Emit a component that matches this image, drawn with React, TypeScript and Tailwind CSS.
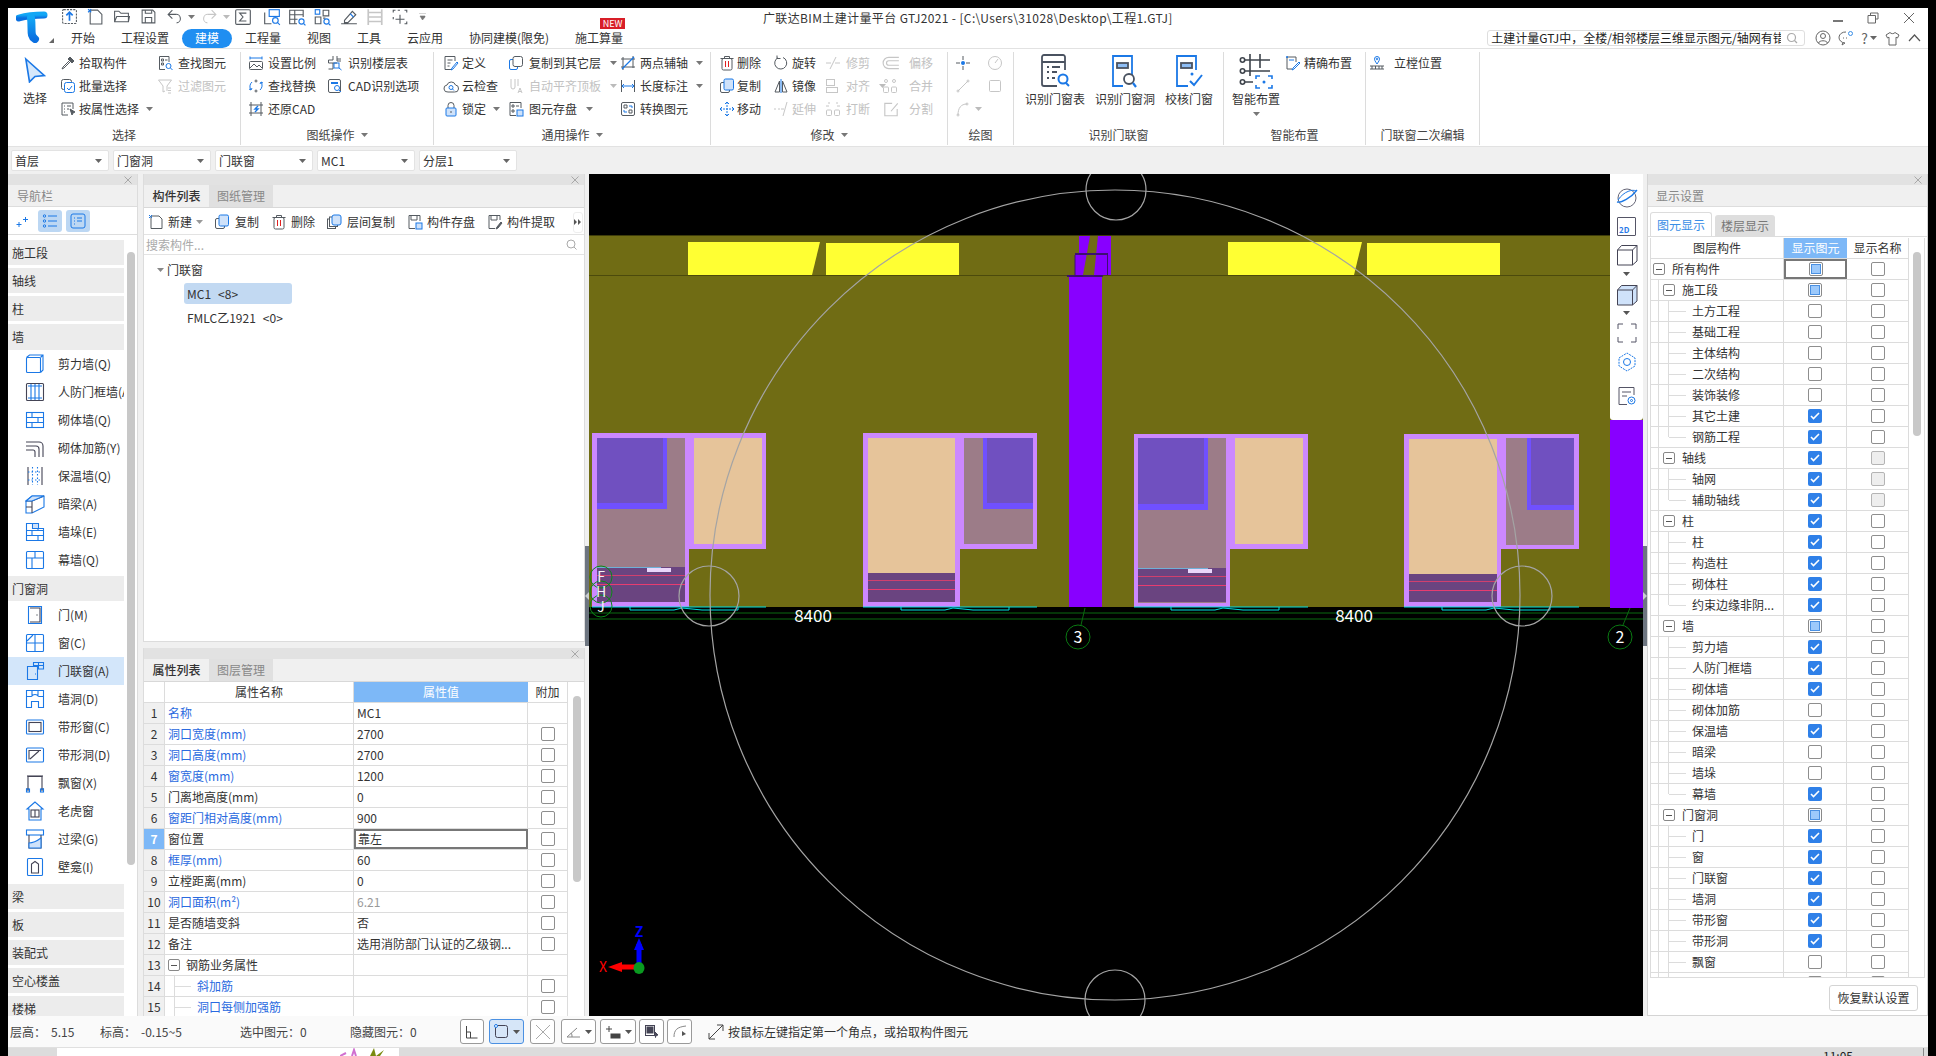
import React from "react";

const D = "#555b61";
const B = "#1b78e6";
const L = "#c6c6c6";

const Ic = ({ s = 16, children }: { s?: number; children: React.ReactNode }) => (
  <svg width={s} height={s} viewBox="0 0 16 16" fill="none" stroke={D} strokeWidth="1" className="shrink-0">
    {children}
  </svg>
);

const Caret = ({ c = "#777" }: { c?: string }) => (
  <svg width="7" height="4" viewBox="0 0 7 4" className="shrink-0">
    <path d="M0 0h7L3.5 4z" fill={c} />
  </svg>
);

/* ribbon icons */
const icPick = <Ic><path d="M10 2l4 4-2 2-4-4z" fill={D} /><path d="M9 6l-6 6-1 2 2-1 6-6" /></Ic>;
const icBatch = <Ic><rect x="1.5" y="1.5" width="10" height="10" rx="2" /><rect x="4.5" y="4.5" width="10" height="10" rx="2" stroke={B} fill="#fff" /><path d="M7 10l2 2 3-4" stroke={B} /></Ic>;
const icAttr = <Ic><path d="M13 8V2H2v12h6" /><path d="M4 5h1M7 5h4M4 8h1M7 8h2M4 11h1" /><path d="M10 8l5 3-2 1-1 2z" fill={D} /></Ic>;
const icFind = <Ic><path d="M12 7V1.5H2.5v13H8" /><path d="M4.5 4h2v2h-2zM8 5h2.5M4.5 8h2v2h-2z" /><circle cx="11.5" cy="11" r="2.5" stroke={B} /><path d="M13.5 13l2 2" stroke={B} /></Ic>;
const icFilter = <Ic><path d="M1.5 2h13L10 8v5M1.5 2L6 8v6l2-1" stroke={L} /><path d="M11 10h3M11 12.5h3M11 15h3" stroke={L} /></Ic>;
const icScale = <Ic><path d="M2 3h12M2 1.5v3M14 1.5v3" stroke={B} /><rect x="1.5" y="6.5" width="13" height="8" rx="1" /><path d="M2 13l4-4 3 3 2-2 3 3" /></Ic>;
const icFloorTable = <Ic><path d="M6 1v4H1.5v3h4.5v6H1.5M6 8h4M10 1v5h4M10 4h4" /><rect x="7" y="8" width="5" height="5" stroke={B} /><path d="M12 13l2.5 2" stroke={B} /></Ic>;
const icReplace = <Ic><path d="M4 4a6 6 0 0 0-1 8" stroke={B} /><path d="M12 12a6 6 0 0 0 1-8" stroke={B} /><path d="M3 12l-2-1M3 12l1-2M13 4l2 1M13 4l-1 2" stroke={B} /><circle cx="8" cy="3" r="1" /><circle cx="8" cy="13" r="1" /></Ic>;
const icCadOpt = <Ic><rect x="1.5" y="1.5" width="12" height="13" rx="1.5" /><path d="M4 5h7" stroke={B} strokeWidth="2" /><circle cx="10" cy="10" r="2.5" stroke={B} /><path d="M12 12l2 2" stroke={B} /></Ic>;
const icRestore = <Ic><path d="M3 1v14M13 1v14M1 4h14M1 12h14" /><path d="M10 5L7 8h3L7 11" stroke={B} strokeWidth="1.4" /></Ic>;
const icDefine = <Ic><path d="M12 6V1.5H2v13h7" /><path d="M4.5 5h5M4.5 8h3M4.5 11h2" /><path d="M14 7l-5 6-1 2 2-1 5-6z" stroke={B} /></Ic>;
const icCloud = <Ic><path d="M5 14a3.5 3.5 0 0 1-1-7 4.5 4.5 0 0 1 8.5 0 3.5 3.5 0 0 1-1 7z" /><circle cx="8" cy="9.5" r="2" stroke={B} /><path d="M9.5 11l1.5 1.5" stroke={B} /></Ic>;
const icLock = <Ic><path d="M5 7V4.5a3 3 0 0 1 6 0V7" /><rect x="3" y="7" width="10" height="8" rx="1" fill="#cfe2fa" stroke={B} /><path d="M8 10v2" stroke={D} /></Ic>;
const icCopyLayer = <Ic><rect x="1.5" y="4.5" width="8" height="10" rx="1.5" stroke={B} /><rect x="5" y="1.5" width="9.5" height="10" rx="2" fill="#fff" /></Ic>;
const icAlignTop = <Ic><path d="M3 1v8a1 1 0 0 0 4 0V1M10 1v7" stroke={L} /><path d="M10 15l2-5 2 5M11 13.5h2" stroke={L} /></Ic>;
const icSaveEl = <Ic><path d="M13 7V1.5H2v13h6" /><path d="M4 4h2v2H4zM8 5h3M4 9h2v2H4z" /><rect x="9" y="9" width="6" height="6" stroke={B} fill="#cfe2fa" /></Ic>;
const icTwoPoint = <Ic><path d="M3 2v13M13 1v12M1 4h14M1 12h14" /><path d="M2 14L14 2" stroke={B} strokeWidth="1.3" /></Ic>;
const icLength = <Ic><path d="M1.5 2v12M14.5 2v12" /><path d="M2 8h12M4 6L2 8l2 2M12 6l2 2-2 2" stroke={B} /></Ic>;
const icConvert = <Ic><rect x="1.5" y="1.5" width="13" height="13" rx="1.5" /><path d="M4 4h3v3H4zM9 9h3v3H9z" /><path d="M9 5h3v2M7 11H4V9" stroke={B} /></Ic>;
const icDelete = <Ic><path d="M1.5 3.5h13M5.5 3V1.5h5V3" /><rect x="3" y="3.5" width="10" height="11.5" rx="1.5" /><path d="M6.5 6v6M9.5 6v6" stroke="#e02020" /></Ic>;
const icRotate = <Ic><path d="M10 2.5a6 6 0 1 1-5 .2" /><path d="M4 .5v3h3.5" stroke={D} /></Ic>;
const icTrim = <Ic><path d="M1 8h5M10 8h5M11 2L5 14" stroke={L} /></Ic>;
const icOffset = <Ic s={18}><path d="M15 3H6a5 5 0 0 0 0 10h9M15 6H6a2 2 0 0 0 0 4h9" stroke={L} /></Ic>;
const icCopy = <Ic><rect x="1.5" y="4.5" width="9" height="10" rx="1.5" /><rect x="5" y="1" width="9.5" height="11" rx="1.5" fill="#cfe2fa" stroke={B} /></Ic>;
const icMirror = <Ic><path d="M2 14L6.5 3v11zM14 14L9.5 3v11z" /><path d="M8 1v14" stroke={B} /></Ic>;
const icAlign = <Ic><rect x="1.5" y="1.5" width="8" height="6" stroke={L} /><rect x="1.5" y="9.5" width="11" height="5" stroke={L} /></Ic>;
const icMerge = <Ic><circle cx="4" cy="3" r="1.5" stroke={L} /><circle cx="12" cy="3" r="1.5" stroke={L} /><rect x="1.5" y="9" width="5" height="5.5" rx="1" stroke={L} /><rect x="9.5" y="9" width="5" height="5.5" rx="1" stroke={L} /></Ic>;
const icMove = <Ic><path d="M8 1v14M1 8h14" stroke={B} strokeDasharray="2 1" /><path d="M6 3l2-2 2 2M6 13l2 2 2-2M3 6L1 8l2 2M13 6l2 2-2 2" stroke={B} /></Ic>;
const icExtend = <Ic><path d="M1 8h2M5 8h2M8 8h3M14 1l-4 14" stroke={L} /></Ic>;
const icBreak = <Ic><path d="M4 1v2M12 1v2M1 5h3M12 5h3" stroke={L} /><rect x="1.5" y="9" width="5" height="5.5" rx="1" stroke={L} /><rect x="9.5" y="9" width="5" height="5.5" rx="1" stroke={L} /></Ic>;
const icSplit = <Ic s={18}><path d="M9 3H2.5v11h11V8M8 10l6-7" stroke={L} /></Ic>;
const icPoint = <Ic><path d="M8 1v4M8 11v4M1 8h4M11 8h4" stroke={D} /><circle cx="8" cy="8" r="2" fill={B} stroke="none" /></Ic>;
const icCircle = <Ic><circle cx="8" cy="8" r="6.5" stroke={L} /><path d="M8 8l3-4" stroke={L} /></Ic>;
const icLine = <Ic><path d="M3 13L13 3" stroke={L} /><circle cx="3" cy="13" r="1" stroke={L} /><circle cx="13" cy="3" r="1" stroke={L} /></Ic>;
const icRect = <Ic><rect x="2.5" y="2.5" width="11" height="11" rx="1" stroke={L} /></Ic>;
const icArc = <Ic><path d="M3 14C3 7 6 3 12 3" stroke={L} /><circle cx="3" cy="14" r="1" stroke={L} /><circle cx="12" cy="3" r="1" stroke={L} /></Ic>;
const icAccurate = <Ic><path d="M2 2h9v5M2 2v12h5" /><path d="M4 5h5" stroke={B} /><path d="M14 7l-6 6-1 2 2-1 6-6z" stroke={B} /><circle cx="2" cy="2" r="1" fill={B} stroke="none" /></Ic>;
const icPost = <Ic><path d="M8 9C6 6 5.5 5 5.5 4a2.5 2.5 0 0 1 5 0C10.5 5 10 6 8 9z" stroke={B} /><circle cx="8" cy="4" r=".8" stroke={B} /><path d="M1 11h14M1 14h14" /><path d="M3 11v3M6.5 11v3M10 11v3M13 11v3" /></Ic>;

const BigTable = () => (
  <svg width="32" height="34" viewBox="0 0 32 34" fill="none" stroke="#4a5260" strokeWidth="1.8" className="shrink-0">
    <path d="M26 16V3a2 2 0 0 0-2-2H5a2 2 0 0 0-2 2v27a2 2 0 0 0 2 2h13" />
    <path d="M3 8h23M8 13h2M13 13h8M8 18h2M13 18h5M8 24h2M13 24h3" />
    <circle cx="24" cy="25" r="4.5" stroke={B} strokeWidth="2" />
    <path d="M27 29l3 3" stroke={B} strokeWidth="2" />
  </svg>
);
const BigOpening = () => (
  <svg width="32" height="34" viewBox="0 0 32 34" fill="none" stroke={B} strokeWidth="1.8" className="shrink-0">
    <path d="M4 33V2h19v19M4 32h10" />
    <rect x="8" y="9" width="11" height="5" fill="#8dbdf5" stroke="#4a5260" />
    <circle cx="20" cy="25" r="5" stroke="#4a5260" />
    <path d="M24 29l3 4" strokeWidth="2.2" />
  </svg>
);
const BigCheck = () => (
  <svg width="32" height="34" viewBox="0 0 32 34" fill="none" stroke={B} strokeWidth="1.8" className="shrink-0">
    <path d="M4 33V2h19v14M4 32h11" />
    <rect x="8" y="9" width="11" height="5" fill="#8dbdf5" stroke="#4a5260" />
    <circle cx="19" cy="20" r="1.5" fill={B} stroke="none" />
    <path d="M17 27l4 4 8-10" strokeWidth="2" />
  </svg>
);
const BigSmart = () => (
  <svg width="34" height="36" viewBox="0 0 34 36" fill="none" stroke="#3e444c" strokeWidth="1.6" className="shrink-0">
    <path d="M11 1v22M21 1v14M5 7h26M5 18h26M5 29h9" />
    <circle cx="3.5" cy="7" r="2.2" /><circle cx="3.5" cy="18" r="2.2" /><circle cx="3.5" cy="29" r="2.2" />
    <path d="M21 23h-4v3M29 23h4v3M21 35h-4v-3M29 35h4v-3" stroke={B} />
    <circle cx="25" cy="29" r="1.5" fill={B} stroke="none" />
  </svg>
);

const Item = ({
  icon,
  label,
  caret,
  off,
  gap = "gap-[3px]",
}: {
  icon: React.ReactNode;
  label: string;
  caret?: boolean;
  off?: boolean;
  gap?: string;
}) => (
  <div className={`flex h-[23px] items-center whitespace-nowrap ${gap} ${off ? "text-[#c2c2c2]" : "text-[#333]"}`}>
    {icon}
    <span>{label}</span>
    {caret && <span className="ml-[4px]"><Caret c={off ? "#bbb" : "#777"} /></span>}
  </div>
);

const Col = ({ w, children }: { w: string; children: React.ReactNode }) => (
  <div className={`flex shrink-0 flex-col ${w}`}>{children}</div>
);

const Big = ({ w, icon, label, caret }: { w: string; icon: React.ReactNode; label: string; caret?: boolean }) => (
  <div className={`flex shrink-0 flex-col items-center whitespace-nowrap text-[#333] ${w}`}>
    <div className="mt-[2px] flex h-[36px] items-center">{icon}</div>
    <div className="h-[20px] leading-[20px]">{label}</div>
    {caret && <div className="mt-[3px]"><Caret /></div>}
  </div>
);

const Group = ({
  w,
  pad = "",
  label,
  caret,
  children,
}: {
  w: string;
  pad?: string;
  label: string;
  caret?: boolean;
  children: React.ReactNode;
}) => (
  <div className={`my-[3px] flex h-[93px] shrink-0 flex-col border-r border-[#dcdcdc] ${w}`}>
    <div className={`-mt-[1px] flex h-[74px] ${pad}`}>{children}</div>
    <div className="flex h-[20px] items-center justify-center gap-[6px] text-[#444]">
      {label}
      {caret && <Caret />}
    </div>
  </div>
);

/* quick access toolbar */
const qat: { w: string; el: React.ReactNode }[] = [
  { w: "w-[26px]", el: <Ic s={17}><rect x="1.5" y="1.5" width="13" height="13" rx="1" strokeDasharray="2 1" /><path d="M8 12V5M5 7l3-3 3 3" stroke="#1b78e6" strokeWidth="1.6" /></Ic> },
  { w: "w-[26px]", el: <Ic s={17}><path d="M3 2h7l4 4v9H3z" /><path d="M1 1l3 3M4 1L1 4" stroke={B} /></Ic> },
  { w: "w-[27px]", el: <Ic s={17}><path d="M1.5 13V3h4l2 2h7v8zM1.5 13l2-5h12l-1 5" /></Ic> },
  { w: "w-[26px]", el: <Ic s={17}><path d="M2 2h10l2 2v10H2z" /><path d="M5 2v3h6V2M5 14V9h6v5" /></Ic> },
  { w: "w-[35px]", el: <div className="flex items-center gap-[5px]"><Ic s={17}><path d="M6 2L2 6l4 4M2 6h7a4 4 0 0 1 1 8" /></Ic><Caret /></div> },
  { w: "w-[33px]", el: <div className="flex items-center gap-[5px]"><Ic s={17}><path d="M10 2l4 4-4 4M14 6H7a4 4 0 0 0-1 8" stroke={L} /></Ic><Caret c="#bbb" /></div> },
  { w: "w-[29px]", el: <Ic s={18}><rect x="1.5" y="1.5" width="13" height="13" rx="1" /><path d="M11 4.5H5L8 8l-3 3.5h6" /></Ic> },
  { w: "w-[25px]", el: <Ic s={18}><rect x="5.5" y="1.5" width="9" height="6" stroke={B} /><path d="M1.5 4v10h6" /><circle cx="11" cy="11" r="2.5" stroke={B} /><path d="M13 13l2 2" stroke={B} /></Ic> },
  { w: "w-[25px]", el: <Ic s={18}><path d="M8 14H1.5V2h12v6M1.5 6h12M1.5 10h7M6 2v12" /><circle cx="12" cy="12" r="2.3" stroke={B} /><path d="M14 14l1.5 1.5" stroke={B} /></Ic> },
  { w: "w-[27px]", el: <Ic s={18}><rect x="2" y="1.5" width="4" height="4" stroke={B} /><path d="M9 2h5v5H9zM2 8h5v6H2zM9 9h2" /><circle cx="12" cy="12" r="2.3" stroke={B} /><path d="M14 14l1.5 1.5" stroke={B} /></Ic> },
  { w: "w-[26px]", el: <Ic s={18}><path d="M1 14h14M4 11l7-8 3 3-7 7H4z" /><path d="M9 5l3 3" stroke={B} /></Ic> },
  { w: "w-[25px]", el: <Ic s={18}><path d="M2 1v14M14 1v14M2 4h12M2 8h12M2 12h12" stroke={L} strokeWidth="1.5" /></Ic> },
  { w: "w-[28px]", el: <Ic s={18}><path d="M2 4V2h2M6 2h2M12 2h2v2M14 12v2h-2M2 8v2" /><path d="M8 6v8M4 10h8" stroke={D} /></Ic> },
  { w: "w-[10px]", el: <svg width="7" height="8" viewBox="0 0 7 8"><path d="M0 0h7M1 3h5v1L3.5 7z" stroke="#777" fill="#777" strokeWidth=".6" /></svg> },
];

const tabs: [string, string][] = [
  ["开始", "w-[56px]"],
  ["工程设置", "w-[68px]"],
  ["建模", "w-[56px]"],
  ["工程量", "w-[56px]"],
  ["视图", "w-[56px]"],
  ["工具", "w-[44px]"],
  ["云应用", "w-[68px]"],
  ["协同建模(限免)", "w-[100px]"],
  ["施工算量", "w-[80px]"],
];

const Header = () => (
  <div className="flex h-[40px] bg-white">
    <div className="relative w-[47px] shrink-0">
      <svg width="32" height="32" viewBox="0 0 32 32" className="ml-[8px] mt-[3px]">
        <defs>
          <linearGradient id="lg" x1="0" y1="0" x2="0" y2="1">
            <stop offset="0" stopColor="#13a7f5" />
            <stop offset="1" stopColor="#0a6fe0" />
          </linearGradient>
        </defs>
        <path d="M3 7c7-2 18-3 25-3" stroke="url(#lg)" strokeWidth="7" strokeLinecap="round" fill="none" />
        <path d="M15 7c1 7 0 13 1 17 .5 2 1.5 3 3 4" stroke="url(#lg)" strokeWidth="8" strokeLinecap="round" fill="none" />
      </svg>
      <svg width="5" height="5" viewBox="0 0 5 5" className="absolute right-[1px] top-[30px]"><path d="M5 0v5H0z" fill="#666" /></svg>
    </div>
    <div className="flex min-w-0 flex-1 flex-col">
      <div className="flex h-[20px] items-center">
        <div className="flex w-[708px] shrink-0 items-center pl-[6px]">
          {qat.map((q, i) => (
            <div key={i} className={`flex shrink-0 justify-start pb-[3px] ${q.w}`}>{q.el}</div>
          ))}
        </div>
        <div className="whitespace-nowrap text-[12px] tracking-[0.37px] text-[#333]">广联达BIM土建计量平台 GTJ2021 - [C:\Users\31028\Desktop\工程1.GTJ]</div>
        <div className="flex-1" />
        <div className="flex items-center gap-[24px] pr-[13px] text-[#666]">
          <div className="mt-[6px] h-[2px] w-[10px] bg-[#777]" />
          <svg width="12" height="12" viewBox="0 0 12 12" fill="none" stroke="#666"><path d="M3.5 3V1H11v6H9M1 3.5h7.5V11H1z" /></svg>
          <svg width="12" height="12" viewBox="0 0 12 12" fill="none" stroke="#666"><path d="M1 1l10 10M11 1L1 11" /></svg>
        </div>
      </div>
      <div className="flex h-[20px] items-center">
        {tabs.map(([t, w]) => (
          <div key={t} className={`relative flex shrink-0 justify-center ${w}`}>
            {t === "建模" ? (
              <div className="flex h-[19px] w-[50px] items-center justify-center rounded-full bg-[#1f8ef1] text-white">{t}</div>
            ) : (
              <div className="text-[#333]">{t}</div>
            )}
            {t === "施工算量" && (
              <div className="absolute left-[41px] top-[-11px] flex h-[11px] w-[25px] items-center justify-center bg-[#d81e28] text-[9px] leading-none text-white">NEW</div>
            )}
          </div>
        ))}
        <div className="flex-1" />
        <div className="flex h-[16px] w-[318px] items-center rounded-[3px] border border-[#dedede] pl-[3px] pr-[6px]">
          <div className="w-[290px] overflow-hidden whitespace-nowrap text-[12px] leading-[14px] text-[#222]">土建计量GTJ中，全楼/相邻楼层三维显示图元/轴网有错位怎么办</div>
          <div className="flex-1" />
          <svg width="12" height="12" viewBox="0 0 12 12" fill="none" stroke="#aaa" strokeWidth="1.2"><circle cx="5.5" cy="5.5" r="4" /><path d="M8.5 8.5L11 11" /></svg>
        </div>
        <div className="ml-[10px] flex items-center gap-[7px] pr-[7px]">
          <svg width="16" height="16" viewBox="0 0 16 16" fill="none" stroke="#666"><circle cx="8" cy="8" r="7" /><circle cx="8" cy="6" r="2.5" /><path d="M3.5 13c1-3 8-3 9 0" /></svg>
          <svg width="16" height="16" viewBox="0 0 16 16" fill="none" stroke="#666"><path d="M8 2a6.5 5.5 0 1 0-1 11l-3 2 1-2.5" /><path d="M5 8h1M8 8h1" /><circle cx="12.5" cy="3.5" r="2" stroke="#3a8ee6" /></svg>
          <div className="flex items-center gap-[2px] text-[14px] leading-none text-[#666]">?<Caret c="#666" /></div>
          <svg className="ml-[1px]" width="15" height="15" viewBox="0 0 15 15" fill="none" stroke="#666"><path d="M5 1.5L1 4l1.5 3L4 6.2V14h7V6.2l1.5.8L14 4l-4-2.5c-1 1.5-4 1.5-5 0z" /></svg>
          <svg className="ml-[1px]" width="13" height="8" viewBox="0 0 13 8" fill="none" stroke="#555" strokeWidth="1.2"><path d="M1 7l5.5-6L12 7" /></svg>
        </div>
      </div>
    </div>
  </div>
);

const Ribbon = () => (
  <div className="flex h-[99px] border-y border-[#e2e2e2] bg-white text-[12px]">
    <Group w="w-[233px]" pad="pl-[2px]" label="选择">
      <div className="flex w-[50px] shrink-0 flex-col items-center text-[#333]">
        <svg width="22" height="26" viewBox="0 0 24 28" fill="#d6e8fb" stroke={B} strokeWidth="1.8" className="mt-[6px]"><path d="M2 2l20 18-10 1-6 6z" /></svg>
        <div className="mt-[6px]">选择</div>
      </div>
      <Col w="w-[97px]">
        <Item icon={icPick} label="拾取构件" />
        <Item icon={icBatch} label="批量选择" />
        <Item icon={icAttr} label="按属性选择" caret />
      </Col>
      <Col w="w-[80px]">
        <Item icon={icFind} label="查找图元" gap="gap-[5px]" />
        <Item icon={icFilter} label="过滤图元" off gap="gap-[5px]" />
      </Col>
    </Group>
    <Group w="w-[193px]" pad="pl-[7px]" label="图纸操作" caret>
      <Col w="w-[79px]">
        <Item icon={icScale} label="设置比例" gap="gap-[4px]" />
        <Item icon={icReplace} label="查找替换" gap="gap-[4px]" />
        <Item icon={icRestore} label="还原CAD" gap="gap-[4px]" />
      </Col>
      <Col w="w-[100px]">
        <Item icon={icFloorTable} label="识别楼层表" gap="gap-[5px]" />
        <Item icon={icCadOpt} label="CAD识别选项" gap="gap-[5px]" />
      </Col>
    </Group>
    <Group w="w-[277px]" pad="pl-[9px]" label="通用操作" caret>
      <Col w="w-[65px]">
        <Item icon={icDefine} label="定义" />
        <Item icon={icCloud} label="云检查" />
        <Item icon={icLock} label="锁定" caret />
      </Col>
      <Col w="w-[112px]">
        <Item icon={icCopyLayer} label="复制到其它层" caret gap="gap-[5px]" />
        <Item icon={icAlignTop} label="自动平齐顶板" caret off gap="gap-[5px]" />
        <Item icon={icSaveEl} label="图元存盘" caret gap="gap-[5px]" />
      </Col>
      <Col w="w-[85px]">
        <Item icon={icTwoPoint} label="两点辅轴" caret gap="gap-[4px]" />
        <Item icon={icLength} label="长度标注" caret gap="gap-[4px]" />
        <Item icon={icConvert} label="转换图元" gap="gap-[4px]" />
      </Col>
    </Group>
    <Group w="w-[237px]" pad="pl-[8px]" label="修改" caret>
      <Col w="w-[54px]">
        <Item icon={icDelete} label="删除" gap="gap-[2px]" />
        <Item icon={icCopy} label="复制" gap="gap-[2px]" />
        <Item icon={icMove} label="移动" gap="gap-[2px]" />
      </Col>
      <Col w="w-[52px]">
        <Item icon={icRotate} label="旋转" />
        <Item icon={icMirror} label="镜像" />
        <Item icon={icExtend} label="延伸" off />
      </Col>
      <Col w="w-[57px]">
        <Item icon={icTrim} label="修剪" off gap="gap-[5px]" />
        <Item icon={icAlign} label="对齐" caret off gap="gap-[5px]" />
        <Item icon={icBreak} label="打断" off gap="gap-[5px]" />
      </Col>
      <Col w="w-[60px]">
        <Item icon={icOffset} label="偏移" off gap="gap-[9px]" />
        <Item icon={icMerge} label="合并" off gap="gap-[11px]" />
        <Item icon={icSplit} label="分割" off gap="gap-[9px]" />
      </Col>
    </Group>
    <Group w="w-[66px]" pad="pl-[7px]" label="绘图">
      <Col w="w-[32px]">
        <Item icon={icPoint} label="" />
        <Item icon={icLine} label="" />
        <Item icon={<div className="flex items-center gap-[4px]">{icArc}<Caret c="#bbb" /></div>} label="" />
      </Col>
      <Col w="w-[20px]">
        <Item icon={icCircle} label="" />
        <Item icon={icRect} label="" />
      </Col>
    </Group>
    <Group w="w-[210px]" label="识别门联窗">
      <Big w="w-[82px]" icon={<BigTable />} label="识别门窗表" />
      <Big w="w-[58px]" icon={<BigOpening />} label="识别门窗洞" />
      <Big w="w-[70px]" icon={<BigCheck />} label="校核门窗" />
    </Group>
    <Group w="w-[142px]" pad="pl-[3px]" label="智能布置">
      <Big w="w-[58px]" icon={<BigSmart />} label="智能布置" caret />
      <Col w="w-[76px]">
        <Item icon={icAccurate} label="精确布置" />
      </Col>
    </Group>
    <Group w="w-[114px]" pad="pl-[3px]" label="门联窗二次编辑">
      <Col w="w-[90px]">
        <Item icon={icPost} label="立樘位置" gap="gap-[9px]" />
      </Col>
    </Group>
  </div>
);

const ComboBar = () => (
  <div className="flex h-[27px] gap-[4px] bg-[#f0f0f0] pl-[3px] pt-[3px] text-[12px]">
    {["首层", "门窗洞", "门联窗", "MC1", "分层1"].map((t) => (
      <div key={t} className="flex h-[21px] w-[98px] items-center justify-between rounded-[2px] border border-[#e3e3e3] bg-white pl-[3px] pr-[6px] text-[#333]">
        {t}
        <Caret c="#666" />
      </div>
    ))}
  </div>
);

const CloseX = () => (
  <svg width="8" height="8" viewBox="0 0 8 8" fill="none" stroke="#a8a8a8"><path d="M.5.5l7 7M7.5.5l-7 7" /></svg>
);

const GrayBar = () => (
  <div className="flex h-[11px] shrink-0 items-center justify-end bg-[#e2e2e2] pr-[5px]">
    <CloseX />
  </div>
);

/* nav icons */
const N = ({ children }: { children: React.ReactNode }) => (
  <svg width="20" height="20" viewBox="0 0 20 20" fill="none" stroke={B} strokeWidth="1.1" className="shrink-0">
    {children}
  </svg>
);

const navWall: [string, React.ReactNode][] = [
  ["剪力墙(Q)", <N><rect x="1.5" y="3.5" width="14" height="15" rx="1" /><path d="M1.5 3.5L4.5 1H18v15l-2.5 2.5M15.5 3.5L18 1" /></N>],
  ["人防门框墙(A)", <N><rect x="1.5" y="1.5" width="17" height="17" rx="1" stroke="#445" /><path d="M6 2v16M10 2v16M14 2v16M3 4h14M3 16h14" /></N>],
  ["砌体墙(Q)", <N><rect x="1.5" y="2.5" width="17" height="15" /><path d="M1.5 7.5h17M1.5 12.5h17M7 2.5v5M13 7.5v5M7 12.5v5" /></N>],
  ["砌体加筋(Y)", <N><path d="M1 4h13a4 4 0 0 1 4 4v11M1 8h10a3 3 0 0 1 3 3v8M1 12h7a2 2 0 0 1 2 2v5" stroke="#445" /></N>],
  ["保温墙(Q)", <N><path d="M3 1v18M17 1v18" stroke="#445" /><path d="M7.5 1v18M12.5 1v18M3 6h14M3 14h14" strokeDasharray="1.5 2" /></N>],
  ["暗梁(A)", <N><path d="M1 7l6-5h12v11l-12 6H1z" /><path d="M1 7h6V19M7 7l12-5M1 13h6" stroke="#445" /><path d="M1 7l6-5h12L7 7z" fill="#cfe2fa" /></N>],
  ["墙垛(E)", <N><path d="M1.5 1.5h6v5h11v12h-17z" /><path d="M1.5 8.5h17M1.5 13.5h17M7 8.5v5M13 13.5v5M13 8.5v-2M7.5 1.5h6v5" /><rect x="8" y="2" width="5" height="4" fill="#cfe2fa" stroke="none" /></N>],
  ["幕墙(Q)", <N><rect x="1.5" y="1.5" width="17" height="17" rx="1" /><path d="M1.5 8h17M10 1.5V8M7 8v10.5" /></N>],
];
const navOpen: [string, React.ReactNode][] = [
  ["门(M)", <N><path d="M3.5 1.5h13v17h-13z" /><path d="M5 3h10v14H5" stroke="#445" /><circle cx="12" cy="10" r=".7" fill={D} stroke="none" /></N>],
  ["窗(C)", <N><rect x="1.5" y="1.5" width="17" height="17" rx="1" /><path d="M1.5 10h17M10 1.5v17M2 8l6-6" /></N>],
  ["门联窗(A)", <N><path d="M2.5 18.5v-13h10v13zM12.5 8h6V1.5h-10v4M13.5 1.5V8M8.5 4.5h10M10 13h1" /></N>],
  ["墙洞(D)", <N><path d="M1.5 18.5v-17h17v17h-5v-6h-7v6zM1.5 7.5h5M13.5 7.5h5M7 2v5M13 2v5M6.5 7.5a4 4 0 0 1 7 0" /></N>],
  ["带形窗(C)", <N><rect x="1.5" y="3" width="17" height="14" rx="1" /><rect x="4" y="5.5" width="12" height="9" stroke="#445" /></N>],
  ["带形洞(D)", <N><rect x="1.5" y="3" width="17" height="14" rx="1" /><path d="M4 14.5V5.5h12M5 14l9-8" stroke="#445" /></N>],
  ["飘窗(X)", <N><path d="M3 18V3.5h14V18M1 16h3M16 16h3" stroke="#445" /><path d="M2 3h16" stroke="#445" /><rect x="1.5" y="16" width="3" height="3" /><rect x="15.5" y="16" width="3" height="3" /></N>],
  ["老虎窗", <N><path d="M10 1L2 8h2v11h12V8h2z" /><rect x="6" y="9" width="8" height="7" stroke="#445" /><path d="M10 9v7" stroke="#445" /></N>],
  ["过梁(G)", <N><rect x="1.5" y="1" width="17" height="5" /><path d="M4 6v13h12V6" stroke="#445" /><path d="M4 14c4 0 8-2 12-5v10H4z" fill="#cfe2fa" /></N>],
  ["壁龛(I)", <N><rect x="2.5" y="1.5" width="15" height="17" rx="1" /><path d="M6.5 16V7L10 4.5 13.5 7v9z" stroke="#445" /></N>],
];

const Acc = ({ t }: { t: string }) => (
  <div className="mb-[3px] flex h-[25px] shrink-0 items-center bg-[#ececec] pl-[4px] text-[#333]">{t}</div>
);

const NavRow = ({ t, icon }: { t: string; icon: React.ReactNode }) => (
  <div className="flex h-[28px] shrink-0 items-center pl-[17px]">
    {icon}
    <div className="ml-[13px] overflow-hidden whitespace-nowrap text-[#333]">{t}</div>
  </div>
);

const Nav = () => (
  <div className="flex h-full w-[130px] shrink-0 flex-col overflow-hidden border-r border-[#dcdcdc] bg-white text-[12px]">
    <GrayBar />
    <div className="flex h-[22px] shrink-0 items-center border-b border-[#ddd] bg-[#f0f0f0] pl-[9px] text-[#888]">导航栏</div>
    <div className="flex h-[28px] shrink-0 items-center border-b border-[#ddd] pl-[8px]">
      <svg width="14" height="14" viewBox="0 0 14 14" fill="none" stroke={B}><path d="M3 8v5M.5 10.5h5M9.5 3v5M7 5.5h5" /></svg>
      <div className="ml-[8px] flex h-[22px] w-[24px] items-center justify-center rounded-[3px] bg-[#bcd7f3]">
        <svg width="16" height="16" viewBox="0 0 16 16" fill="none" stroke={B}><circle cx="2.5" cy="3" r="1.2" /><circle cx="2.5" cy="8" r="1.2" /><circle cx="2.5" cy="13" r="1.2" /><path d="M6 3h9M6 8h9M6 13h9" /></svg>
      </div>
      <div className="ml-[4px] flex h-[22px] w-[24px] items-center justify-center rounded-[3px] bg-[#bcd7f3]">
        <svg width="16" height="16" viewBox="0 0 16 16" fill="none" stroke={B}><rect x="1" y="1" width="14" height="14" rx="2" /><path d="M4 5h1M7 5h5M4 8h1M7 8h5M4 11h1" /></svg>
      </div>
    </div>
    <div className="flex min-h-0 flex-1 pt-[5px]">
      <div className="flex w-[116px] shrink-0 flex-col overflow-hidden">
        <Acc t="施工段" />
        <Acc t="轴线" />
        <Acc t="柱" />
        <div className="flex h-[26px] shrink-0 items-center bg-[#ececec] pl-[4px] text-[#333]">墙</div>
        {navWall.map(([t, ic]) => (
          <NavRow key={t} t={t} icon={ic} />
        ))}
        <div className="h-[2px] shrink-0" />
        <div className="flex h-[25px] shrink-0 items-center bg-[#ececec] pl-[4px] text-[#333]">门窗洞</div>
        {navOpen.map(([t, ic]) => (
          <div key={t} className={t === "门联窗(A)" ? "bg-[#d3e6fa]" : ""}>
            <NavRow t={t} icon={ic} />
          </div>
        ))}
        <div className="h-[3px] shrink-0" />
        {["梁", "板", "装配式", "空心楼盖", "楼梯"].map((t) => (
          <Acc key={t} t={t} />
        ))}
      </div>
      <div className="ml-[3px] mt-[12px] h-[613px] w-[8px] rounded-[4px] bg-[#c8c8c8]" />
    </div>
  </div>
);

const Tabs = ({ a, b }: { a: string; b: string }) => (
  <div className="flex h-[23px] shrink-0 border-b border-[#d8d8d8] bg-[#f0f0f0] text-[12px]">
    <div className="flex w-[65px] items-center justify-center font-medium text-[#333]">{a}</div>
    <div className="flex w-[64px] items-center justify-center bg-[#e0e0e0] text-[#888]">{b}</div>
  </div>
);

const TB = ({ ic, t, x, caret, w }: { ic: React.ReactNode; t: string; x?: string; caret?: boolean; w: string }) => (
  <div className={`flex shrink-0 items-center whitespace-nowrap text-[#333] ${w} ${x ?? "gap-[4px]"}`}>
    {ic}
    {t}
    {caret && <Caret c="#999" />}
  </div>
);

const ListPanel = () => (
  <div className="flex h-[468px] shrink-0 flex-col overflow-hidden border border-t-0 border-[#dcdcdc] bg-white text-[12px]">
    <GrayBar />
    <Tabs a="构件列表" b="图纸管理" />
    <div className="flex h-[27px] shrink-0 items-center border-b border-[#e3e3e3] pl-[4px] pt-[2px]">
      <TB w="w-[66px]" ic={<Ic><path d="M3 2h8l3 3v9.5H3z" /><path d="M1 1l3 3M4 1L1 4" stroke={B} /></Ic>} t="新建" caret />
      <TB w="w-[57px]" x="gap-[5px]" ic={icCopy} t="复制" />
      <TB w="w-[55px]" ic={icDelete} t="删除" />
      <TB w="w-[81px]" x="gap-[5px]" ic={<Ic><rect x="1.5" y="5" width="8" height="9.5" /><rect x="3.5" y="3" width="8" height="9.5" fill="#fff" /><rect x="6" y="1" width="9" height="10" rx="2" fill="#cfe2fa" stroke={B} /></Ic>} t="层间复制" />
      <TB w="w-[80px]" ic={<Ic><path d="M13 7V1.5H2v13h6" /><path d="M4 1.5V6h6V1.5" /><rect x="9" y="9" width="6" height="6" fill="#cfe2fa" stroke={B} /></Ic>} t="构件存盘" />
      <TB w="w-[86px]" ic={<Ic><path d="M13 6V1.5H2v13h6" /><path d="M4 1.5V6h6V1.5" /><path d="M14 8l-4 5-1 2 2-1 4-5z" fill={D} /></Ic>} t="构件提取" />
      <div className="flex h-[21px] w-[10px] items-center justify-center rounded-[3px] border border-[#eee]">
        <svg width="8" height="6" viewBox="0 0 8 6" fill="#555"><path d="M0 0l3 3-3 3zM4 0l3 3-3 3z" /></svg>
      </div>
    </div>
    <div className="flex h-[20px] shrink-0 items-center justify-between border-b border-[#e3e3e3] pl-[2px] pr-[7px] text-[#aaa]">
      搜索构件...
      <svg width="11" height="11" viewBox="0 0 11 11" fill="none" stroke="#aaa"><circle cx="5" cy="5" r="4" /><path d="M8 8l2.5 2.5" /></svg>
    </div>
    <div className="pl-[13px] pt-[5px] text-[#333]">
      <div className="flex h-[20px] items-center gap-[3px]"><Caret c="#888" />门联窗</div>
      <div className="ml-[27px] mt-[3px] flex h-[21px] w-[108px] items-center gap-[7px] rounded-[3px] bg-[#c2d9f2] pl-[3px]">MC1 <span>&lt;8&gt;</span></div>
      <div className="ml-[30px] mt-[4px] flex h-[20px] items-center gap-[7px]">FMLC乙1921 <span>&lt;0&gt;</span></div>
    </div>
  </div>
);

const Cb = ({ k = "e" }: { k?: "e" | "c" | "p" | "d" }) => {
  if (k === "c")
    return (
      <div className="flex h-[14px] w-[14px] items-center justify-center rounded-[2px] bg-[#2f80e8]">
        <svg width="10" height="8" viewBox="0 0 10 8" fill="none" stroke="#fff" strokeWidth="1.6"><path d="M1 4l2.5 2.5L9 1" /></svg>
      </div>
    );
  if (k === "p")
    return (
      <div className="flex h-[14px] w-[14px] items-center justify-center rounded-[2px] border border-[#8a8a8a] bg-white">
        <div className="h-[10px] w-[10px] border border-[#4a90e2] bg-[#9cc9fb]" />
      </div>
    );
  return <div className={k === "d" ? "h-[14px] w-[14px] rounded-[2px] border border-[#b4b4b4] bg-[#eee]" : "h-[14px] w-[14px] rounded-[2px] border border-[#8e8e8e] bg-white"} />;
};

const Exp = () => (
  <div className="flex h-[12px] w-[12px] shrink-0 items-center justify-center rounded-[2px] border border-[#888] bg-white">
    <div className="h-[1px] w-[6px] bg-[#555]" />
  </div>
);

const props: { n: string; v: string; blue?: boolean; cb?: boolean; gray?: boolean; sel?: boolean; sub?: number }[] = [
  { n: "名称", v: "MC1", blue: true },
  { n: "洞口宽度(mm)", v: "2700", blue: true, cb: true },
  { n: "洞口高度(mm)", v: "2700", blue: true, cb: true },
  { n: "窗宽度(mm)", v: "1200", blue: true, cb: true },
  { n: "门离地高度(mm)", v: "0", cb: true },
  { n: "窗距门相对高度(mm)", v: "900", blue: true, cb: true },
  { n: "窗位置", v: "靠左", cb: true, sel: true },
  { n: "框厚(mm)", v: "60", blue: true, cb: true },
  { n: "立樘距离(mm)", v: "0", cb: true },
  { n: "洞口面积(m²)", v: "6.21", blue: true, cb: true, gray: true },
  { n: "是否随墙变斜", v: "否", cb: true },
  { n: "备注", v: "选用消防部门认证的乙级钢...", cb: true },
  { n: "钢筋业务属性", v: "", sub: 1 },
  { n: "斜加筋", v: "", blue: true, cb: true, sub: 2 },
  { n: "洞口每侧加强筋", v: "", blue: true, cb: true, sub: 2 },
];

const PropsPanel = () => (
  <div className="mt-[6px] flex min-h-0 flex-1 flex-col overflow-hidden border-x border-[#dcdcdc] bg-white text-[12px]">
    <GrayBar />
    <Tabs a="属性列表" b="图层管理" />
    <div className="flex min-h-0 flex-1 overflow-hidden">
      <div className="w-[424px] shrink-0">
        <div className="grid h-[21px] grid-cols-[21px_189px_174px_40px] border-b border-[#dcdcdc] text-[#333]">
          <div className="border-r border-[#dcdcdc]" />
          <div className="flex items-center justify-center border-r border-[#dcdcdc]">属性名称</div>
          <div className="flex items-center justify-center bg-[#7db8f7] text-white">属性值</div>
          <div className="flex items-center justify-center border-r border-[#dcdcdc]">附加</div>
        </div>
        {props.map((p, i) => (
          <div key={p.n} className="grid h-[21px] grid-cols-[21px_189px_174px_40px] border-b border-[#dcdcdc]">
            <div className={`flex items-center justify-center border-r border-[#dcdcdc] ${p.sel ? "bg-[#7db8f7] font-bold text-white" : "bg-[#f0f0f0] text-[#333]"}`}>{i + 1}</div>
            <div className={`flex items-center overflow-hidden whitespace-nowrap border-r border-[#dcdcdc] ${p.blue ? "text-[#2a6ae0]" : "text-[#333]"}`}>
              {p.sub === 1 && <div className="ml-[3px] mr-[6px]"><Exp /></div>}
              {p.sub === 2 && (
                <div className="ml-[9px] mr-[6px] flex h-full w-[17px] items-center border-l border-[#dcdcdc]">
                  <div className="h-[1px] w-full bg-[#dcdcdc]" />
                </div>
              )}
              {!p.sub && <div className="w-[3px]" />}
              {p.n}
            </div>
            <div className={`flex items-center overflow-hidden whitespace-nowrap ${p.sel ? "border-2 border-[#777] pl-[2px]" : "border-r border-[#dcdcdc] pl-[3px]"} ${p.gray ? "text-[#999]" : "text-[#333]"}`}>{p.v}</div>
            <div className="flex items-center justify-center border-r border-[#dcdcdc]">{p.cb && <Cb />}</div>
          </div>
        ))}
      </div>
      <div className="ml-[5px] mt-[14px] h-[186px] w-[8px] rounded-[4px] bg-[#c8c8c8]" />
    </div>
  </div>
);

const Handle = ({ dir }: { dir: "l" | "r" }) => (
  <div className="w-[4px] shrink-0">
    <div className="mt-[372px] flex h-[100px] w-[4px] items-center justify-center bg-[#6d7580]">
      <svg width="4" height="8" viewBox="0 0 4 8" fill="#c8ccd0">{dir === "l" ? <path d="M4 0v8L0 4z" /> : <path d="M0 0v8l4-4z" />}</svg>
    </div>
  </div>
);

/* the CAD viewport, in screen coordinates */
const Olive = "#706c14";
const Frame = "#cc88ff";
const Mauve = "#9c7c88";
const Peach = "#e6c49a";
const Band = "#6a4480";

const Bands = ({ x, w, y, c = 0 }: { x: number; w: number; y: number; c?: number }) => (
  <g>
    <rect x={x} y={y} width={w} height={602 - y} fill={Band} />
    <rect x={x} y={y + 7 + c} width={w} height="1" fill="#d0406e" />
    <rect x={x} y={y + 16 + c} width={w} height="1" fill="#e83c70" />
  </g>
);

const Bubble = ({ cx, cy, t }: { cx: number; cy: number; t: string }) => (
  <g>
    <circle cx={cx} cy={cy} r="12" fill="none" stroke="#0a7a12" />
    <text x={cx} y={cy + 6} textAnchor="middle" fontSize="16" fill="#fff">{t}</text>
  </g>
);

const Canvas = () => (
  <div className="relative w-[1054px] shrink-0 overflow-hidden bg-black">
    <svg width="1054" height="842" viewBox="589 174 1054 842" className="block">
      <rect x="589" y="236" width="1054" height="371" fill={Olive} />
      <rect x="589" y="275" width="1054" height="1" fill="#4c4a0c" />
      <rect x="589" y="235" width="1054" height="1" fill="#3e3c0a" />
      {/* yellow strips */}
      <path d="M688 242H820L812 275H688Z" fill="#ffff33" />
      <rect x="826" y="243" width="133" height="32" fill="#ffff33" />
      <path d="M1228 242H1362L1354 275H1228Z" fill="#ffff33" />
      <rect x="1367" y="243" width="133" height="32" fill="#ffff33" />
      {/* columns */}
      <rect x="1079" y="236" width="32" height="39" fill="#8800ff" />
      <rect x="1075" y="254" width="33" height="21" fill="#8800ff" />
      <path d="M1090 236H1098L1094 275H1083Z" fill={Olive} />
      <rect x="1075" y="253" width="33" height="2" fill="#3c1070" />
      <path d="M1075 255V275M1107.5 253V275" stroke="#3c1070" />
      <rect x="1069" y="275" width="33" height="332" fill="#8800ff" />
      <rect x="1067" y="275" width="36" height="2" fill="#3c1070" />
      <rect x="1610" y="420" width="33" height="188" fill="#8800ff" />

      {/* bay 1 */}
      <path d="M592 433H766V549H689V607H592Z" fill={Frame} />
      <rect x="597" y="438" width="88" height="164" fill={Mauve} />
      <rect x="597" y="438" width="70" height="71" fill="#7050ff" />
      <rect x="597" y="438" width="66" height="65" fill="#7050c0" />
      <Bands x={597} w={88} y={567} c={1} />
      <rect x="597" y="567" width="64" height="1" fill="#6fb0d8" />
      <rect x="647" y="568" width="24" height="4" fill="#ead6fa" />
      <rect x="694" y="438" width="68" height="106" fill={Peach} />

      {/* bay 2 */}
      <path d="M863 433H1037V549H960V607H863Z" fill={Frame} />
      <rect x="868" y="438" width="87" height="135" fill={Peach} />
      <Bands x={868} w={87} y={573} />
      <rect x="964" y="438" width="69" height="106" fill={Mauve} />
      <rect x="983" y="438" width="50" height="71" fill="#7050ff" />
      <rect x="987" y="438" width="46" height="65" fill="#7050c0" />

      {/* bay 3 */}
      <path d="M1134 434H1308V549H1230V607H1134Z" fill={Frame} />
      <rect x="1138" y="438" width="88" height="165" fill={Mauve} />
      <rect x="1138" y="438" width="70" height="72" fill="#7050ff" />
      <rect x="1138" y="438" width="66" height="66" fill="#7050c0" />
      <Bands x={1138} w={88} y={568} c={1} />
      <rect x="1138" y="568" width="70" height="1" fill="#6fb0d8" />
      <rect x="1188" y="569" width="24" height="4" fill="#ead6fa" />
      <rect x="1235" y="438" width="68" height="106" fill={Peach} />

      {/* bay 4 */}
      <path d="M1404 434H1579V549H1501V607H1404Z" fill={Frame} />
      <rect x="1409" y="439" width="88" height="135" fill={Peach} />
      <Bands x={1409} w={88} y={574} />
      <rect x="1506" y="438" width="68" height="107" fill={Mauve} />
      <rect x="1527" y="438" width="47" height="72" fill="#7050ff" />
      <rect x="1531" y="438" width="43" height="67" fill="#7050c0" />

      {/* grid lines and dims */}
      <g stroke="#00e0e0" fill="none">
        <path d="M592 607H766M863 607H1037M1134 607H1308M1404 607H1579" />
        <path d="M630 607v3h44l8-2 20 2h36v-3M901 607v3h44l8-2 20 2h36v-3M1171 607v3h44l8-2 20 2h36v-3M1442 607v3h44l8-2 20 2h36v-3" />
      </g>
      <g stroke="#0a6a10">
        <path d="M589 613H1643M589 619H1643" />
        <path d="M1085 608L1081 625M1630 608L1623 625" />
      </g>
      <text x="813" y="622" textAnchor="middle" fontSize="17" fill="#fff">8400</text>
      <text x="1354" y="622" textAnchor="middle" fontSize="17" fill="#fff">8400</text>
      <Bubble cx={1078} cy={637} t="3" />
      <Bubble cx={1620} cy={637} t="2" />

      {/* letters on the left axis */}
      <g fill="none" stroke="#0a8a18">
        <circle cx="601" cy="577" r="11" />
        <circle cx="601" cy="592" r="11" />
        <circle cx="601" cy="606" r="11" />
      </g>
      <g fill="#f4f4f4" fontSize="14" textAnchor="middle">
        <text x="601" y="582">F</text>
        <text x="601" y="597">H</text>
        <text x="601" y="612">J</text>
      </g>

      {/* snap circles */}
      <g fill="none" stroke="#a4a4a4" strokeWidth="1.2">
        <circle cx="1115" cy="595" r="405" />
        <circle cx="1116" cy="190" r="30" />
        <circle cx="709" cy="596" r="30" />
        <circle cx="1522" cy="596" r="30" />
        <circle cx="1115" cy="1000" r="30" />
      </g>

      {/* axis */}
      <path d="M639 968V944" stroke="#0000ff" strokeWidth="5" />
      <path d="M634 950L639 938L644 950Z" fill="#0000ff" />
      <text x="639" y="937" textAnchor="middle" fontSize="14" fill="#0000ff" fontWeight="bold">Z</text>
      <path d="M639 967H616" stroke="#ff0000" strokeWidth="5" />
      <path d="M622 962L608 967L622 972Z" fill="#ff0000" />
      <text x="603" y="972" textAnchor="middle" fontSize="14" fill="#ff0000">X</text>
      <ellipse cx="639" cy="968" rx="5.5" ry="6" fill="#0a9a20" />
    </svg>

    {/* view tools over the drawing */}
    <div className="absolute right-0 top-0 flex h-[246px] w-[33px] flex-col items-center rounded-b-[3px] bg-white pt-[14px]">
      <svg width="22" height="20" viewBox="0 0 22 20" fill="none" stroke="#667"><ellipse cx="11" cy="10" rx="9" ry="9" /><path d="M1 14c4 1 14-4 20-12" stroke={B} strokeWidth="1.3" /><path d="M2 12C8 3 17 1 20 3" stroke={B} /></svg>
      <div className="mt-[9px] flex h-[19px] w-[19px] items-end rounded-[1px] border border-[#556] pb-[1px] pl-[1px] text-[8px] font-bold leading-none text-[#2a7ae8]">2D</div>
      <svg className="mt-[8px]" width="22" height="22" viewBox="0 0 22 22" fill="none" stroke="#445"><path d="M1.5 6h15v15h-15zM1.5 6l4-4.5H21V17l-4.5 4M16.5 6L21 1.5" /></svg>
      <div className="mt-[6px]"><Caret c="#555" /></div>
      <svg className="mt-[8px]" width="22" height="22" viewBox="0 0 22 22" fill="#cfe2fa" stroke="#445"><path d="M1.5 6h15v15h-15zM1.5 6l4-4.5H21V17l-4.5 4M16.5 6L21 1.5" /></svg>
      <div className="mt-[5px]"><Caret c="#555" /></div>
      <svg className="mt-[8px]" width="20" height="20" viewBox="0 0 20 20" fill="none" stroke="#556"><path d="M1 6V1h5M14 1h5v5M19 14v5h-5M6 19H1v-5" /></svg>
      <svg className="mt-[9px]" width="20" height="20" viewBox="0 0 20 20" fill="none" stroke={B}><path d="M2 6l8-5 8 5v8l-8 5-8-5z" strokeDasharray="2 1" /><circle cx="10" cy="10" r="3.5" /></svg>
      <svg className="mt-[14px]" width="20" height="20" viewBox="0 0 20 20" fill="none" stroke="#556"><path d="M17 9V1.5H2v17h8" /><path d="M5 6h9M5 10h5" /><circle cx="14.5" cy="14.5" r="3.5" stroke={B} /><circle cx="14.5" cy="14.5" r="1" stroke={B} /></svg>
    </div>
  </div>
);

type R = { t: string; l: 0 | 1 | 2; a: "e" | "c" | "p"; b?: "e" | "d"; end?: boolean };
const rows: R[] = [
  { t: "所有构件", l: 0, a: "p" },
  { t: "施工段", l: 1, a: "p" },
  { t: "土方工程", l: 2, a: "e" },
  { t: "基础工程", l: 2, a: "e" },
  { t: "主体结构", l: 2, a: "e" },
  { t: "二次结构", l: 2, a: "e" },
  { t: "装饰装修", l: 2, a: "e" },
  { t: "其它土建", l: 2, a: "c" },
  { t: "钢筋工程", l: 2, a: "c", end: true },
  { t: "轴线", l: 1, a: "c", b: "d" },
  { t: "轴网", l: 2, a: "c", b: "d" },
  { t: "辅助轴线", l: 2, a: "c", b: "d", end: true },
  { t: "柱", l: 1, a: "c" },
  { t: "柱", l: 2, a: "c" },
  { t: "构造柱", l: 2, a: "c" },
  { t: "砌体柱", l: 2, a: "c" },
  { t: "约束边缘非阴...", l: 2, a: "c", end: true },
  { t: "墙", l: 1, a: "p" },
  { t: "剪力墙", l: 2, a: "c" },
  { t: "人防门框墙", l: 2, a: "c" },
  { t: "砌体墙", l: 2, a: "c" },
  { t: "砌体加筋", l: 2, a: "e" },
  { t: "保温墙", l: 2, a: "c" },
  { t: "暗梁", l: 2, a: "e" },
  { t: "墙垛", l: 2, a: "e" },
  { t: "幕墙", l: 2, a: "c", end: true },
  { t: "门窗洞", l: 1, a: "p" },
  { t: "门", l: 2, a: "c" },
  { t: "窗", l: 2, a: "c" },
  { t: "门联窗", l: 2, a: "c" },
  { t: "墙洞", l: 2, a: "c" },
  { t: "带形窗", l: 2, a: "c" },
  { t: "带形洞", l: 2, a: "c" },
  { t: "飘窗", l: 2, a: "e" },
  { t: "", l: 2, a: "e" },
];

const TreeName = ({ r }: { r: R }) => {
  if (r.l === 0)
    return (
      <div className="flex h-full items-center pl-[2px] text-[#333]">
        <Exp />
        <span className="ml-[7px]">{r.t}</span>
      </div>
    );
  if (r.l === 1)
    return (
      <div className="flex h-full items-center text-[#333]">
        <div className="h-full w-[8px] border-r border-[#dcdcdc]" />
        <div className="ml-[4px]"><Exp /></div>
        <span className="ml-[7px]">{r.t}</span>
      </div>
    );
  return (
    <div className="flex h-full items-center text-[#333]">
      <div className="h-full w-[8px] border-r border-[#dcdcdc]" />
      <div className={`w-[10px] border-r border-[#dcdcdc] ${r.end ? "mb-[10px] h-[10px]" : "h-full"}`} />
      <div className="h-[1px] w-[17px] bg-[#dcdcdc]" />
      <span className="ml-[6px] whitespace-nowrap">{r.t}</span>
    </div>
  );
};

const Display = () => (
  <div className="flex h-full w-[281px] shrink-0 flex-col overflow-hidden border-x border-b border-[#d4d4d4] bg-white text-[12px]">
    <GrayBar />
    <div className="flex h-[22px] shrink-0 items-center border-b border-[#ddd] bg-[#f0f0f0] pl-[8px] text-[#888]">显示设置</div>
    <div className="flex h-[30px] shrink-0 items-end border-b border-[#ddd] pl-[2px]">
      <div className="flex h-[24px] w-[62px] items-center justify-center rounded-t-[3px] border border-b-0 border-[#dcdcdc] text-[#3a8ee6]">图元显示</div>
      <div className="ml-[3px] flex h-[21px] w-[60px] items-center justify-center rounded-t-[3px] bg-[#dedede] text-[#777]">楼层显示</div>
    </div>
    <div className="mx-[2px] mt-[1px] flex h-[740px] shrink-0 overflow-hidden border-x border-b border-[#dcdcdc]">
      <div className="w-[258px] shrink-0">
        <div className="grid h-[21px] grid-cols-[133px_63px_62px] border-b border-[#dcdcdc] text-[#333]">
          <div className="flex items-center justify-center border-r border-[#dcdcdc]">图层构件</div>
          <div className="flex items-center justify-center bg-[#7db8f7] text-white">显示图元</div>
          <div className="flex items-center justify-center border-r border-[#dcdcdc]">显示名称</div>
        </div>
        {rows.map((r, i) => (
          <div key={i} className="grid h-[21px] grid-cols-[133px_63px_62px] border-b border-[#dcdcdc]">
            <div className="overflow-hidden border-r border-[#dcdcdc]"><TreeName r={r} /></div>
            <div className={`flex items-center justify-center ${i === 0 ? "border-2 border-[#777]" : "border-r border-[#dcdcdc]"}`}><Cb k={r.a} /></div>
            <div className="flex items-center justify-center border-r border-[#dcdcdc]"><Cb k={r.b ?? "e"} /></div>
          </div>
        ))}
      </div>
      <div className="ml-[4px] mt-[14px] h-[184px] w-[8px] rounded-[4px] bg-[#c8c8c8]" />
    </div>
    <div className="flex flex-1 items-start justify-end pr-[9px] pt-[7px]">
      <div className="flex h-[26px] w-[89px] items-center justify-center rounded-[3px] border border-[#d4d4d4] text-[#333]">恢复默认设置</div>
    </div>
  </div>
);

const StatusBtn = ({ w, on, children }: { w: string; on?: boolean; children: React.ReactNode }) => (
  <div className={`flex h-[25px] shrink-0 items-center justify-center gap-[4px] rounded-[3px] border ${w} ${on ? "border-[#4a90e2] bg-[#d6e6f8]" : "border-[#9a9a9a] bg-white"}`}>
    {children}
  </div>
);

const Status = () => (
  <div className="flex h-[31px] shrink-0 items-center bg-[#fafafa] text-[12px] text-[#444]">
    <div className="w-[43px] pl-[2px]">层高：</div>
    <div className="w-[49px]">5.15</div>
    <div className="w-[41px]">标高：</div>
    <div className="w-[99px]">-0.15~5</div>
    <div className="w-[110px]">选中图元：0</div>
    <div className="w-[110px]">隐藏图元：0</div>
    <div className="flex items-center">
      <StatusBtn w="w-[24px]"><svg width="14" height="14" viewBox="0 0 14 14" fill="none" stroke="#444"><path d="M1.5 1v12h11M1.5 7h4v6" /></svg></StatusBtn>
      <div className="ml-[5px]">
        <StatusBtn w="w-[35px]" on><svg width="15" height="15" viewBox="0 0 15 15" fill="none" stroke="#445"><rect x="1.5" y="1.5" width="12" height="12" rx="2" /><circle cx="2" cy="2" r="1.5" fill="#fff" stroke={B} /></svg><Caret c="#555" /></StatusBtn>
      </div>
      <div className="ml-[6px]">
        <StatusBtn w="w-[25px]"><svg width="16" height="16" viewBox="0 0 16 16" fill="none" stroke="#aaa"><path d="M1 1l14 14M15 1L1 15" /></svg></StatusBtn>
      </div>
      <div className="ml-[6px]">
        <StatusBtn w="w-[35px]"><svg width="15" height="15" viewBox="0 0 15 15" fill="none" stroke="#888"><path d="M1 13h13M1 13l10-9M6 13a5 5 0 0 0-1-4" /></svg><Caret c="#555" /></StatusBtn>
      </div>
      <div className="ml-[4px]">
        <StatusBtn w="w-[36px]"><svg width="16" height="14" viewBox="0 0 16 14" fill="none" stroke="#444"><path d="M1 4h6M4 1v6" /><rect x="6" y="9" width="9" height="4" fill="#444" /></svg><Caret c="#555" /></StatusBtn>
      </div>
      <div className="ml-[3px]">
        <StatusBtn w="w-[25px]"><svg width="15" height="15" viewBox="0 0 15 15" fill="none" stroke="#445"><rect x="1.5" y="1.5" width="9" height="10" /><rect x="3" y="3" width="6" height="6" fill="#445" /><path d="M11 8l3 3-2 .5-.5 2z" fill="#445" /></svg></StatusBtn>
      </div>
      <div className="ml-[3px]">
        <StatusBtn w="w-[25px]"><svg width="16" height="15" viewBox="0 0 16 15" fill="none" stroke="#888"><path d="M2 13C2 6 5 3 14 2" /><path d="M10 7l4 3-4 2z" fill="#555" stroke="none" /></svg></StatusBtn>
      </div>
      <svg className="ml-[16px]" width="16" height="16" viewBox="0 0 16 16" fill="none" stroke="#444"><path d="M1 15L15 1M9 1h6v6M1 9v6h6" /></svg>
      <div className="ml-[4px] whitespace-nowrap text-[#333]">按鼠标左键指定第一个角点，或拾取构件图元</div>
    </div>
  </div>
);

const Taskbar = () => (
  <div className="flex h-[9px] shrink-0 overflow-hidden border-t border-[#e0e0e0] bg-[#dcdcdc]">
    <div className="ml-[49px] flex h-full w-[342px] justify-end bg-white pr-[9px]">
      <svg width="50" height="8" viewBox="0 0 50 8"><path d="M0 8l6-3M12 8l2-6 2 6" stroke="#d070d0" fill="none" strokeWidth="2" /><path d="M30 8l4-8 2 8 8-6-4 6" fill="#7a8a10" /></svg>
    </div>
    <div className="ml-[1424px] whitespace-nowrap pt-[1px] text-[12px] leading-[14px] text-[#222]">11:05</div>
    <div className="flex-1" />
    <div className="mr-[4px] h-full w-[1px] bg-[#888]" />
  </div>
);

export default function App() {
  return (
    <div className="h-[1056px] w-[1936px] overflow-hidden bg-black px-[8px] pt-[8px] font-['Noto_Sans_CJK_SC','Liberation_Sans',sans-serif] text-[12px]">
      <div className="flex h-[1048px] w-[1920px] flex-col bg-[#f0f0f0]">
        <Header />
        <Ribbon />
        <ComboBar />
        <div className="flex h-[842px] min-h-0 shrink-0">
          <Nav />
          <div className="w-[5px] shrink-0" />
          <div className="flex h-full w-[442px] shrink-0 flex-col">
            <ListPanel />
            <PropsPanel />
          </div>
          <Handle dir="l" />
          <Canvas />
          <Handle dir="r" />
          <Display />
        </div>
        <Status />
        <Taskbar />
      </div>
    </div>
  );
}
